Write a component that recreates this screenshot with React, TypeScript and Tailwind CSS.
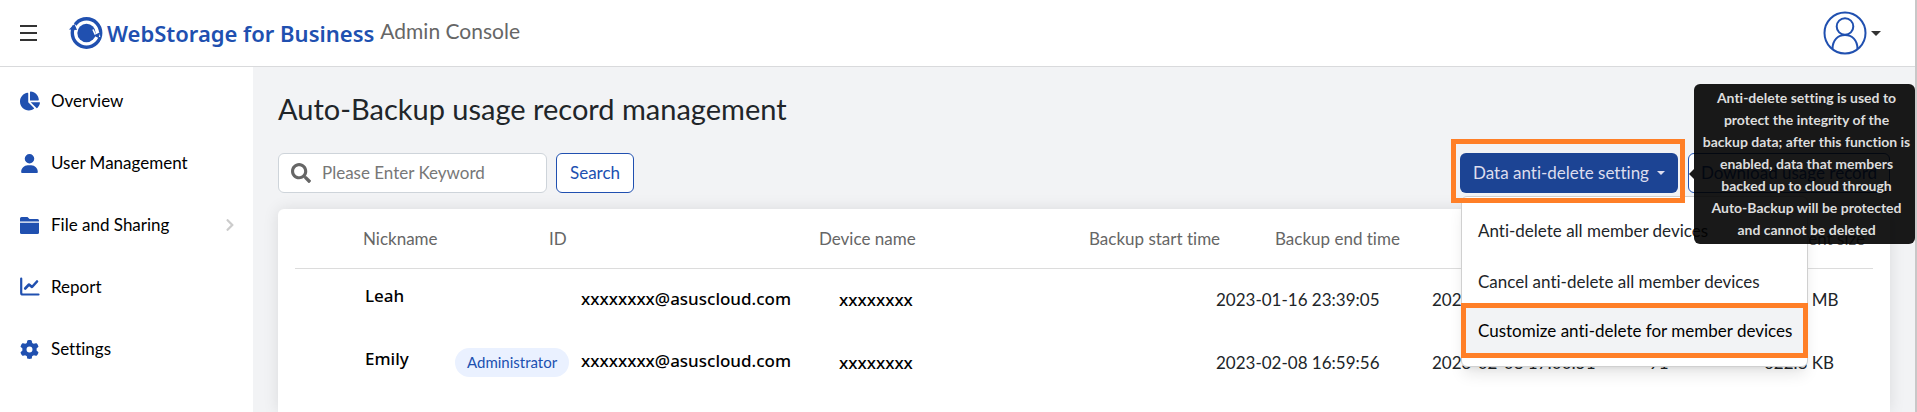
import { useState } from "react";
import { FaChartPie, FaChevronRight, FaSearch } from "react-icons/fa";
import { FaGear, FaUser } from "react-icons/fa6";

function Logo() {
  return (
    <svg viewBox="0 0 34 34" className="h-[34px] w-[34px] shrink-0" fill="none" aria-hidden="true">
      <circle cx="17.500" cy="17" r="14.200" stroke="#2050b0" strokeWidth="3.400" />
      <circle cx="17.500" cy="17" r="9.200" fill="#2050b0" />
      <path d="M3 7 L8 11.500 L6.500 16" stroke="#fff" strokeWidth="2" />
      <path d="M0 13.500 L5.500 8 L8 14 Z" fill="#2050b0" />
      <path d="M24 13.500 L26.500 19 L30 17.500 L30.500 21" stroke="#fff" strokeWidth="1.600" />
      <path d="M24.500 19.500 L31.500 16 L29.500 22 Z" fill="#2050b0" />
    </svg>
  );
}

function FolderIcon() {
  return (
    <svg viewBox="0 0 19 17" className="h-[17px] w-[19px]" fill="currentColor" aria-hidden="true">
      <path d="M0 4.500 V1.500 Q0 0 1.500 0 H7.500 L9.500 2 H17.500 Q19 2 19 3.500 V4.500 Z" />
      <path d="M0 5.800 H19 V15.500 Q19 17 17.500 17 H1.500 Q0 17 0 15.500 Z" />
    </svg>
  );
}

function ChartIcon() {
  return (
    <svg viewBox="0 0 20 20" className="h-5 w-5" fill="none" stroke="currentColor" strokeWidth="2.200" strokeLinecap="round" strokeLinejoin="round" aria-hidden="true">
      <path d="M1.200 1.500 V16 Q1.200 17.500 2.700 17.500 H18.500" />
      <path d="M5.200 11.500 L9 7.500 L12 10 L17 4.500" strokeWidth="2.600" />
    </svg>
  );
}

function Avatar() {
  return (
    <svg viewBox="0 0 44 44" className="h-11 w-11" fill="none" stroke="#2050b0" strokeWidth="2" aria-hidden="true">
      <circle cx="22" cy="22" r="20.500" />
      <circle cx="22" cy="15.500" r="8.300" />
      <path d="M9.500 38 C9.500 29 15 24 22 24 S34.500 29 34.500 38" />
    </svg>
  );
}

const nav = [
  { label: "Overview", icon: <FaChartPie size={20} /> },
  { label: "User Management", icon: <FaUser size={19} /> },
  { label: "File and Sharing", icon: <FolderIcon />, more: true },
  { label: "Report", icon: <ChartIcon /> },
  { label: "Settings", icon: <FaGear size={19} /> },
];

const rows = [
  { name: "Leah", role: "", id: "xxxxxxxx@asuscloud.com", device: "xxxxxxxx", start: "2023-01-16 23:39:05", end: "2023-01-16 23:39:32", count: "12", size: "122.8 MB" },
  { name: "Emily", role: "Administrator", id: "xxxxxxxx@asuscloud.com", device: "xxxxxxxx", start: "2023-02-08 16:59:56", end: "2023-02-08 17:00:51", count: "91", size: "622.8 KB" },
];

const actions = [
  "Anti-delete all member devices",
  "Cancel anti-delete all member devices",
  "Customize anti-delete for member devices",
];

export default function App() {
  const [keyword, setKeyword] = useState("");
  return (
    <div className="flex min-h-screen flex-col border-r-2 border-[#c8c8c8] bg-white font-['Lato',sans-serif] text-[17px] text-[#212529] [font-variant-ligatures:none]">
      <header className="flex h-[67px] shrink-0 items-center border-b border-[#d9dadc] pl-5 pr-[34px]">
        <button aria-label="Toggle menu" className="flex w-[17px] flex-col gap-[5px]">
          <span className="h-0.5 bg-[#333]" />
          <span className="h-0.5 bg-[#333]" />
          <span className="h-0.5 bg-[#333]" />
        </button>
        <a href="#home" className="ml-8 flex items-center gap-1 text-[#2050b0]">
          <Logo />
          <span className="font-['Noto_Sans',sans-serif] text-[22px] font-semibold">WebStorage for Business</span>
        </a>
        <span className="ml-1.5 pb-1 text-[21px] text-[#666]">Admin Console</span>
        <button aria-label="Account" className="ml-auto flex items-center gap-1">
          <Avatar />
          <span className="border-x-[5px] border-t-[5px] border-x-transparent border-t-[#333]" />
        </button>
      </header>

      <div className="flex flex-1">
        <nav className="flex w-[253px] shrink-0 flex-col pt-[3px]">
          {nav.map((n) => (
            <a key={n.label} href="#nav" className="flex h-[62px] items-center pl-5 pr-4 text-black">
              <span className="flex w-[31px] text-[#2050b0]">{n.icon}</span>
              {n.label}
              {n.more && <FaChevronRight size={14} className="ml-auto text-[#ccc]" />}
            </a>
          ))}
        </nav>

        <main className="flex min-w-0 flex-1 flex-col bg-[#f2f3f5] px-[25px] pt-[22px]">
          <h1 className="text-[29px] leading-10">Auto-Backup usage record management</h1>
          <div className="mt-6 flex h-10 items-stretch">
            <label className="flex w-[269px] items-center gap-[11px] rounded-md border border-[#ced4da] bg-white px-3 text-[#666]">
              <FaSearch size={20} className="shrink-0" />
              <input
                aria-label="Keyword"
                value={keyword}
                onChange={(e) => setKeyword(e.target.value)}
                placeholder="Please Enter Keyword"
                className="w-full min-w-0 bg-transparent outline-none placeholder:text-[#777]"
              />
            </label>
            <button className="ml-[9px] rounded-md border border-[#2050b0] bg-white px-[13px] text-[#2050b0]">Search</button>
            <div className="relative ml-auto">
              <button className="flex h-10 w-[218px] items-center justify-center gap-2 rounded-md bg-[#1c4494] text-[#dde]">
                Data anti-delete setting
                <span className="border-x-4 border-t-4 border-x-transparent border-t-[#dde]" />
              </button>
              <div className="pointer-events-none absolute -left-[9px] -right-[7px] -top-[14px] z-20 h-16 border-5 border-[#ff7f27]" />
              <div className="absolute left-px top-[43px] z-10 w-[347px] rounded-md border border-[#d0d0d0] bg-white py-2 shadow-lg">
                {actions.map((a) => (
                  <button key={a} className="block h-[51px] w-full whitespace-nowrap pl-4 text-left last:-mx-px last:-mt-1 last:h-[55px] last:w-[347px] last:border-5 last:border-[#ff7f27] last:bg-[#f2f3f5] last:pl-3 last:text-black">
                    {a}
                  </button>
                ))}
              </div>
              <div role="tooltip" className="absolute left-[234px] top-[-69px] z-30 w-[221px] rounded-md bg-black/90 py-[3px] pl-2 pr-1 text-center text-[14px] font-bold leading-[22px] text-[#ddd]">
                <span className="absolute -left-[5px] top-[85px] border-y-[5px] border-r-[5px] border-y-transparent border-r-black/90" />
                Anti-delete setting is used to protect the integrity of the backup data; after this function is enabled, data that members backed up to cloud through Auto-Backup will be protected and cannot be deleted
              </div>
            </div>
            <button className="ml-[10px] w-[202px] rounded-md border border-[#2050b0] bg-white text-[#2050b0]">Download usage record</button>
          </div>

          <div className="mt-4 flex-1 rounded-t-md bg-white px-[17px] shadow-[0_0_16px_rgba(0,0,0,0.1)]">
            <table className="w-full table-fixed whitespace-nowrap text-left">
              <thead>
                <tr className="h-[59px] border-b border-[#dcdcdc] text-[#666]">
                  <th className="w-[254px] pl-[68px] font-normal">Nickname</th>
                  <th className="w-[270px] font-normal">ID</th>
                  <th className="w-[270px] font-normal">Device name</th>
                  <th className="w-[186px] font-normal">Backup start time</th>
                  <th className="w-[290px] font-normal">Backup end time</th>
                  <th className="w-[199px] font-normal" aria-label="Count" />
                  <th className="pr-2 text-right font-normal">Current size</th>
                </tr>
              </thead>
              <tbody>
                {rows.map((r) => (
                  <tr key={r.name} className="h-[63px]">
                    <td className="pl-[70px]">
                      <div className="flex items-center">
                        <span className="w-[90px] shrink-0 pb-2 font-['Noto_Sans',sans-serif] font-medium text-black">{r.name}</span>
                        {r.role && <span className="rounded-full bg-[#eaf1ff] px-3 text-[15px] leading-[29px] text-[#2050b0]">{r.role}</span>}
                      </div>
                    </td>
                    <td className="pb-[3px] pl-8 font-['Noto_Sans',sans-serif] font-medium text-black">{r.id}</td>
                    <td className="pl-5 font-['Noto_Sans',sans-serif] font-medium text-black">{r.device}</td>
                    <td className="pl-[127px]">{r.start}</td>
                    <td className="pl-[157px]">{r.end}</td>
                    <td className="pl-[84px]">{r.count}</td>
                    <td>{r.size}</td>
                  </tr>
                ))}
              </tbody>
            </table>
          </div>
        </main>
      </div>
    </div>
  );
}
